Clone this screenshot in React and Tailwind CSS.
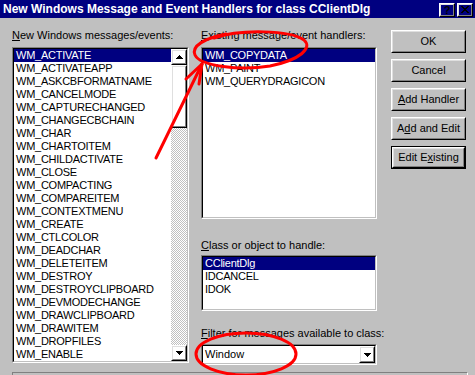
import React from "react";

const Sunken = ({ className = "", innerClass = "", children }) => (
  <div className={`border border-t-[#808080] border-l-[#808080] border-r-white border-b-white ${className}`}>
    <div className={`h-full border border-t-black border-l-black border-r-[#c0c0c0] border-b-[#c0c0c0] ${innerClass}`}>
      {children}
    </div>
  </div>
);

const Raised = ({ className = "", innerClass = "", children }) => (
  <div className={`border border-t-white border-l-white border-r-black border-b-black ${className}`}>
    <div className={`h-full border border-t-[#dfdfdf] border-l-[#dfdfdf] border-r-[#808080] border-b-[#808080] ${innerClass}`}>
      {children}
    </div>
  </div>
);

const Row = ({ children, sel }) => (
  <div
    className={`h-[13px] leading-[13px] pl-[2px] whitespace-nowrap tracking-[-0.25px] ${
      sel ? "bg-[#000080] text-white" : ""
    }`}
  >
    {children}
  </div>
);

const Up = () => (
  <svg width="7" height="4" viewBox="0 0 7 4">
    <path d="M3 0h1v1h1v1h1v1h1v1H0V3h1V2h1V1h1z" fill="#000" />
  </svg>
);
const Down = () => (
  <svg width="7" height="4" viewBox="0 0 7 4">
    <path d="M0 0h7v1H6v1H5v1H4v1H3V3H2V2H1V1H0z" fill="#000" />
  </svg>
);

const leftItems = [
  "WM_ACTIVATE",
  "WM_ACTIVATEAPP",
  "WM_ASKCBFORMATNAME",
  "WM_CANCELMODE",
  "WM_CAPTURECHANGED",
  "WM_CHANGECBCHAIN",
  "WM_CHAR",
  "WM_CHARTOITEM",
  "WM_CHILDACTIVATE",
  "WM_CLOSE",
  "WM_COMPACTING",
  "WM_COMPAREITEM",
  "WM_CONTEXTMENU",
  "WM_CREATE",
  "WM_CTLCOLOR",
  "WM_DEADCHAR",
  "WM_DELETEITEM",
  "WM_DESTROY",
  "WM_DESTROYCLIPBOARD",
  "WM_DEVMODECHANGE",
  "WM_DRAWCLIPBOARD",
  "WM_DRAWITEM",
  "WM_DROPFILES",
  "WM_ENABLE",
];

const Btn = ({ children, def }) =>
  def ? (
    <div className="h-[23px] border border-black">
      <Raised className="h-full" innerClass="flex items-center justify-center">
        {children}
      </Raised>
    </div>
  ) : (
    <Raised className="h-[23px]" innerClass="flex items-center justify-center">
      {children}
    </Raised>
  );

export default function App() {
  return (
    <div className="relative w-[475px] h-[375px] overflow-hidden bg-[#c0c0c0] text-black text-[11px] font-['Liberation_Sans',Arial,sans-serif]">
      {/* Title bar */}
      <div className="h-[18px] bg-[#000080] flex items-center pl-[3px] pr-[2px]">
        <div className="flex-1 text-white font-bold text-[12px] leading-[18px] whitespace-nowrap">
          New Windows Message and Event Handlers for class CClientDlg
        </div>
        <div className="flex gap-[2px] mt-[1px]">
          <Raised className="w-[16px] h-[14px]" innerClass="flex items-center justify-center">
            <span className="font-bold text-[11px] leading-[10px]">?</span>
          </Raised>
          <Raised className="w-[16px] h-[14px]" innerClass="flex items-center justify-center">
            <svg width="8" height="7" viewBox="0 0 8 7">
              <path d="M0 0L7 7M1 0L8 7M7 0L0 7M8 0L1 7" stroke="#000" strokeWidth="1" />
            </svg>
          </Raised>
        </div>
      </div>

      {/* Body */}
      <div className="flex pl-[12px] pt-[11px]">
        {/* Left column */}
        <div className="w-[177px] flex flex-col">
          <div className="h-[13px] leading-[13px] whitespace-nowrap">
            <span className="underline">N</span>ew Windows messages/events:
          </div>
          <Sunken className="mt-[5px] h-[316px] bg-white" innerClass="flex">
            <div className="flex-1 overflow-hidden">
              {leftItems.map((t, i) => (
                <Row key={t} sel={i === 0}>
                  {t}
                </Row>
              ))}
            </div>
            <div className="w-[16px] flex flex-col">
              <Raised className="h-[16px]" innerClass="flex items-center justify-center">
                <Up />
              </Raised>
              <Raised className="h-[63px]" />
              <div className="flex-1 bg-[repeating-conic-gradient(#c0c0c0_0_25%,#ffffff_0_50%)] bg-[length:2px_2px]" />
              <Raised className="h-[16px]" innerClass="flex items-center justify-center">
                <Down />
              </Raised>
            </div>
          </Sunken>
        </div>

        {/* Middle column */}
        <div className="ml-[12px] w-[176px] flex flex-col">
          <div className="h-[13px] leading-[13px] whitespace-nowrap">
            <span className="underline">E</span>xisting message/event handlers:
          </div>
          <Sunken className="mt-[5px] h-[172px] bg-white">
            <Row sel>WM_COPYDATA</Row>
            <Row>WM_PAINT</Row>
            <Row>WM_QUERYDRAGICON</Row>
          </Sunken>
          <div className="mt-[20px] h-[13px] leading-[13px] whitespace-nowrap">
            <span className="underline">C</span>lass or object to handle:
          </div>
          <Sunken className="mt-[3px] h-[56px] bg-white">
            <Row sel>CClientDlg</Row>
            <Row>IDCANCEL</Row>
            <Row>IDOK</Row>
          </Sunken>
          <div className="mt-[16px] h-[13px] leading-[13px] whitespace-nowrap">
            <span className="underline">F</span>ilter for messages available to class:
          </div>
          <Sunken className="mt-[4px] h-[21px] bg-white" innerClass="flex">
            <div className="flex-1 pl-[2px] leading-[17px]">Window</div>
            <Raised className="w-[16px] h-full" innerClass="flex items-center justify-center">
              <Down />
            </Raised>
          </Sunken>
        </div>

        {/* Right column */}
        <div className="ml-[14px] w-[75px] mt-[1px] flex flex-col gap-[6px]">
          <Btn>OK</Btn>
          <Btn>Cancel</Btn>
          <Btn>
            <span>
              <span className="underline">A</span>dd Handler
            </span>
          </Btn>
          <Btn>
            <span>
              A<span className="underline">d</span>d and Edit
            </span>
          </Btn>
          <Btn def>
            <span>
              Edit E<span className="underline">x</span>isting
            </span>
          </Btn>
        </div>
      </div>

      {/* Bottom frame (cut off) */}
      <div className="mt-[7px] ml-[12px] w-[456px] h-[10px] border-t border-l border-r border-t-[#808080] border-l-[#808080] border-r-white" />

      {/* Red annotations */}
      <svg
        className="absolute inset-0 pointer-events-none"
        width="475"
        height="375"
        viewBox="0 0 475 375"
      >
        <g fill="none" stroke="#ff0000" strokeWidth="3" strokeLinecap="round" strokeLinejoin="round">
          <path d="M214 38 C 240 29, 290 30, 304 40 C 313 48, 300 60, 270 66 C 240 71, 200 66, 195 55 C 191 46, 205 38, 226 34" />
          <path d="M156 158 L 202 64" />
          <path d="M202 64 L 186 79" />
          <path d="M202 64 L 199 84" />
          <ellipse cx="246" cy="354" rx="50" ry="21" />
        </g>
      </svg>
    </div>
  );
}
